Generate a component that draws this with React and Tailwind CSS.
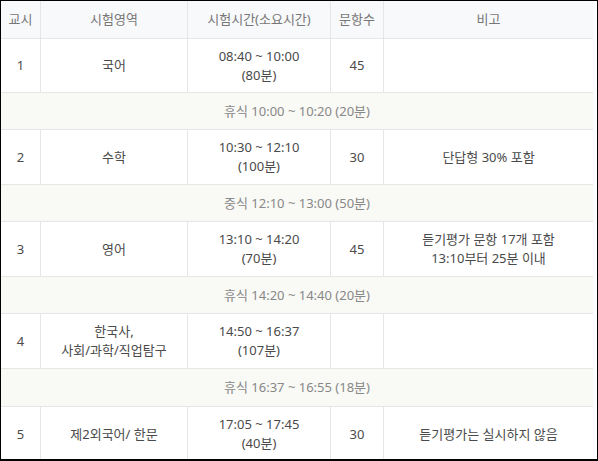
const rows = [
  { type: 'exam', no: '1', subject: ['국어'], time: ['08:40 ~ 10:00', '(80분)'], count: '45', note: [], h: 'h-[54px]' },
  { type: 'break', text: '휴식 10:00 ~ 10:20 (20분)' },
  { type: 'exam', no: '2', subject: ['수학'], time: ['10:30 ~ 12:10', '(100분)'], count: '30', note: ['단답형 30% 포함'] },
  { type: 'break', text: '중식 12:10 ~ 13:00 (50분)' },
  { type: 'exam', no: '3', subject: ['영어'], time: ['13:10 ~ 14:20', '(70분)'], count: '45', note: ['듣기평가 문항 17개 포함', '13:10부터 25분 이내'] },
  { type: 'break', text: '휴식 14:20 ~ 14:40 (20분)' },
  { type: 'exam', no: '4', subject: ['한국사,', '사회/과학/직업탐구'], time: ['14:50 ~ 16:37', '(107분)'], count: '', note: [] },
  { type: 'break', text: '휴식 16:37 ~ 16:55 (18분)', h: 'h-[38px]' },
  { type: 'exam', no: '5', subject: ['제2외국어/ 한문'], time: ['17:05 ~ 17:45', '(40분)'], count: '30', note: ['듣기평가는 실시하지 않음'] },
];

function Cell({ w, last, children }) {
  return (
    <div
      className={`${w} flex flex-col items-center justify-center text-center whitespace-pre ${last ? '' : 'border-r border-[#e6e6e6]'}`}
    >
      {children}
    </div>
  );
}

function Lines({ items }) {
  return items.map((t, i) => <span key={i}>{t}</span>);
}

export default function App() {
  return (
    <div
      className="w-[598px] h-[461px] overflow-hidden bg-white border-t border-l border-r border-b-2 border-black text-[13px] leading-[19px] text-[#4a4a4a]"
      style={{ fontFamily: '"Noto Sans", "Noto Sans CJK KR", sans-serif' }}
    >
      <div className="w-[592px]">
        <div className="flex h-[38px] bg-[#f7f9fb] border-b border-[#e6e6e6] text-[#777]">
          <Cell w="w-[40px]">교시</Cell>
          <Cell w="w-[147px]">시험영역</Cell>
          <Cell w="w-[143px]">시험시간(소요시간)</Cell>
          <Cell w="w-[53px]">문항수</Cell>
          <Cell w="w-[209px]" last>비고</Cell>
        </div>
        {rows.map((r, i) =>
          r.type === 'break' ? (
            <div
              key={i}
              className={`${r.h || 'h-[37px]'} flex items-center justify-center whitespace-pre bg-[#f9f9f5] border-b border-[#e6e6e6] text-[#888]`}
            >
              {r.text}
            </div>
          ) : (
            <div key={i} className={`${r.h || 'h-[55px]'} flex border-b border-[#e6e6e6]`}>
              <Cell w="w-[40px]">{r.no}</Cell>
              <Cell w="w-[147px]"><Lines items={r.subject} /></Cell>
              <Cell w="w-[143px]"><Lines items={r.time} /></Cell>
              <Cell w="w-[53px]">{r.count}</Cell>
              <Cell w="w-[209px]" last><Lines items={r.note} /></Cell>
            </div>
          )
        )}
      </div>
    </div>
  );
}
